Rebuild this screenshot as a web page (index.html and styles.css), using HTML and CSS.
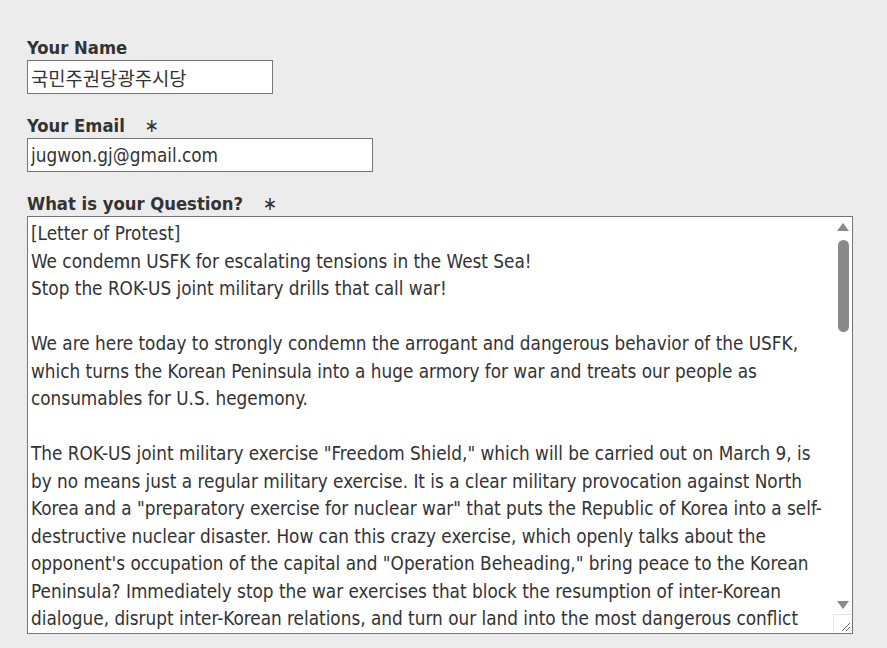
FILE: index.html
```
<!DOCTYPE html>
<html lang="en">
<head>
<meta charset="utf-8">
<title>Question Form</title>
<link rel="stylesheet" href="styles.css">
</head>
<body>
<form class="form">
  <div class="field">
    <label class="label" for="name">Your Name</label>
    <input class="input input-name" id="name" type="text" value="국민주권당광주시당">
  </div>
  <div class="field">
    <label class="label" for="email">Your Email <span class="req">∗</span></label>
    <input class="input input-email" id="email" type="text" value="jugwon.gj@gmail.com">
  </div>
  <div class="field">
    <label class="label">What is your Question? <span class="req">∗</span></label>
    <div class="textbox">
      <div class="textbox-text">
        <div class="line">[Letter of Protest]</div>
        <div class="line">We condemn USFK for escalating tensions in the West Sea!</div>
        <div class="line">Stop the ROK-US joint military drills that call war!</div>
        <div class="line">&nbsp;</div>
        <div class="line">We are here today to strongly condemn the arrogant and dangerous behavior of the USFK,</div>
        <div class="line">which turns the Korean Peninsula into a huge armory for war and treats our people as</div>
        <div class="line">consumables for U.S. hegemony.</div>
        <div class="line">&nbsp;</div>
        <div class="line">The ROK-US joint military exercise "Freedom Shield," which will be carried out on March 9, is</div>
        <div class="line">by no means just a regular military exercise. It is a clear military provocation against North</div>
        <div class="line">Korea and a "preparatory exercise for nuclear war" that puts the Republic of Korea into a self-</div>
        <div class="line">destructive nuclear disaster. How can this crazy exercise, which openly talks about the</div>
        <div class="line">opponent's occupation of the capital and "Operation Beheading," bring peace to the Korean</div>
        <div class="line">Peninsula? Immediately stop the war exercises that block the resumption of inter-Korean</div>
        <div class="line">dialogue, disrupt inter-Korean relations, and turn our land into the most dangerous conflict</div>
      </div>
      <div class="scrollbar">
        <svg class="arrow arrow-up" width="12" height="8" viewBox="0 0 12 8"><polygon points="0,8 6,0 12,8" fill="#8a8a8a"/></svg>
        <div class="thumb"></div>
        <div class="track-space"></div>
        <svg class="arrow arrow-down" width="12" height="8" viewBox="0 0 12 8"><polygon points="0,0 12,0 6,8" fill="#8a8a8a"/></svg>
        <div class="resizer">
          <svg width="18" height="18" viewBox="0 0 18 18"><line x1="8" y1="16" x2="16" y2="8" stroke="#6a6a6a" stroke-width="1"/><line x1="12" y1="16" x2="16" y2="12" stroke="#6a6a6a" stroke-width="1"/></svg>
        </div>
      </div>
    </div>
  </div>
</form>
</body>
</html>
```
FILE: styles.css
```
html, body {
  margin: 0;
  padding: 0;
  background: #ececec;
}

body {
  font-family: "DejaVu Sans Condensed", "DejaVu Sans", "Noto Sans CJK KR", sans-serif;
  color: #333333;
  font-size: 18.8px;
}

.form {
  padding: 37px 0 0 27px;
  display: flex;
  flex-direction: column;
  gap: 21px;
}

.field {
  display: flex;
  flex-direction: column;
  align-items: flex-start;
}

.label {
  display: block;
  font-weight: bold;
  font-size: 18.3px;
  line-height: 21px;
  height: 23px;
  color: #333333;
}

.req {
  font-weight: normal;
  margin-left: 14px;
  font-size: 19px;
}

.input {
  box-sizing: border-box;
  height: 34px;
  border: 1px solid #767676;
  border-radius: 0;
  padding: 0 3px;
  margin: 0;
  font-family: "DejaVu Sans Condensed", "DejaVu Sans", "Noto Sans CJK KR", sans-serif;
  font-size: 18.8px;
  color: #333333;
  background: #ffffff;
  outline: none;
}

.input-name {
  width: 246px;
}

.input-email {
  width: 346px;
}

.textbox {
  box-sizing: border-box;
  width: 826px;
  height: 418px;
  border: 1px solid #767676;
  background: #ffffff;
  display: flex;
  overflow: hidden;
}

.textbox-text {
  flex: 1;
  padding: 3px 0 0 3px;
  line-height: 27.5px;
  font-size: 18.8px;
  overflow: hidden;
  white-space: nowrap;
}

.scrollbar {
  width: 18px;
  flex: none;
  display: flex;
  flex-direction: column;
  align-items: center;
}

.arrow-up {
  margin-top: 6px;
  flex: none;
}

.thumb {
  margin-top: 9px;
  width: 11px;
  height: 92px;
  border-radius: 6px;
  background: #8a8a8a;
  flex: none;
}

.track-space {
  flex: 1;
}

.arrow-down {
  flex: none;
  margin-bottom: 5px;
}

.resizer {
  box-sizing: border-box;
  width: 19px;
  height: 19px;
  margin-left: -1px;
  border-left: 1px solid #e2e2e2;
  border-top: 1px solid #e2e2e2;
  flex: none;
}

.resizer svg {
  display: block;
}
```
